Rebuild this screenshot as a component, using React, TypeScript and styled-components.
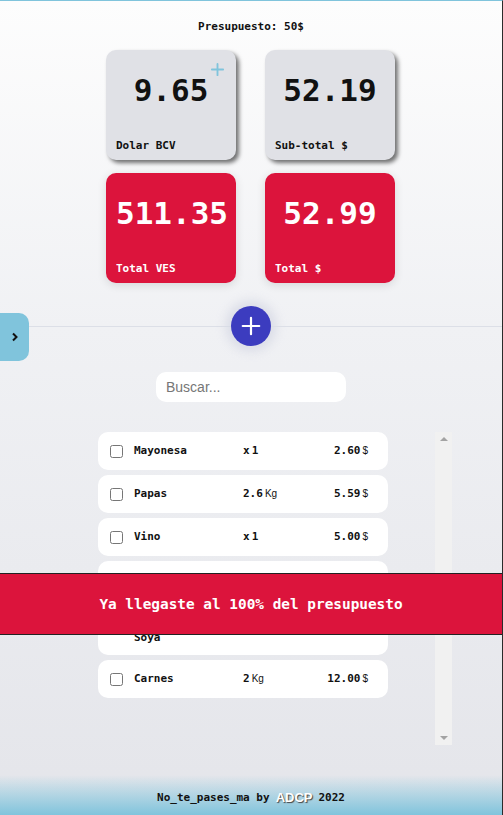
import { type FC } from 'react'
import styled, { createGlobalStyle, css } from 'styled-components'

const GlobalStyle = createGlobalStyle`
  html,
  body {
    margin: 0;
    padding: 0;
  }

  body {
    font-family: 'DejaVu Sans Mono', monospace;
    color: #111;
  }

  * {
    box-sizing: border-box;
  }
`

const Page = styled.main`
  background: linear-gradient(180deg, #fdfdfd 0%, #f0f1f4 40%, #e4e5ea 100%);
  border-right: 1px solid #2b2b2b;
  border-top: 1px solid #80c4dc;
  display: flex;
  flex-direction: column;
  min-height: 100vh;
  overflow: hidden;
  padding-top: 19px;
  position: relative;
`

const Title = styled.h1`
  font-size: 11px;
  font-weight: bold;
  line-height: 14px;
  margin: 0 0 16px;
  text-align: center;
`

const CardGrid = styled.section`
  column-gap: 29px;
  display: grid;
  grid-template-columns: 130px 130px;
  justify-content: center;
  margin-left: -1px;
  row-gap: 13px;
`

const Card = styled.div<{ $accent?: boolean }>`
  border-radius: 10px;
  display: flex;
  flex-direction: column;
  height: 110px;
  justify-content: space-between;
  padding: 22px 10px 7px;
  position: relative;

  ${({ $accent }) =>
    $accent
      ? css`
          background: #dc143c;
          box-shadow: 0 2px 10px rgba(0, 0, 0, 0.12);
          color: #fff;
        `
      : css`
          background: #e0e1e6;
          box-shadow: 3px 3px 4px rgba(0, 0, 0, 0.55);
          color: #111;
        `}
`

const CardValue = styled.span`
  font-size: 31px;
  font-weight: bold;
  line-height: 36px;
  text-align: center;
`

const CardLabel = styled.span`
  font-size: 11px;
  font-weight: bold;
  line-height: 14px;
`

const AddRateButton = styled.button`
  align-items: center;
  background: none;
  border: 0;
  cursor: pointer;
  display: flex;
  padding: 0;
  position: absolute;
  right: 11px;
  top: 12px;
`

const DividerRow = styled.div`
  align-items: center;
  display: flex;
  height: 40px;
  margin-top: 23px;
`

const Line = styled.span`
  background: #dcdfe7;
  flex: 1;
  height: 1px;
`

const AddButton = styled.button`
  align-items: center;
  background: #3c3cbf;
  border: 0;
  border-radius: 50%;
  box-shadow: 0 0 10px 6px rgba(214, 216, 228, 0.75);
  cursor: pointer;
  display: flex;
  height: 40px;
  justify-content: center;
  padding: 0;
  width: 40px;
`

const Search = styled.input`
  align-self: center;
  background: #fff;
  border: 0;
  border-radius: 10px;
  color: #333;
  font-family: 'Liberation Sans', Arial, sans-serif;
  font-size: 14px;
  height: 30px;
  margin-top: 26px;
  outline: none;
  padding: 0 10px;
  width: 190px;

  &::placeholder {
    color: #767676;
  }
`

const ListArea = styled.section`
  column-gap: 47px;
  display: flex;
  height: 313px;
  margin-top: 30px;
  padding-left: 98px;
`

const Items = styled.ul`
  display: flex;
  flex-direction: column;
  gap: 5px;
  list-style: none;
  margin: 0;
  overflow-y: auto;
  padding: 0;
  width: 290px;
`

const Row = styled.li<{ $tall?: boolean }>`
  align-items: center;
  background: #fff;
  border-radius: 10px;
  column-gap: 11px;
  display: grid;
  flex-shrink: 0;
  font-size: 11px;
  font-weight: bold;
  grid-template-columns: 13px 98px 1fr auto;
  height: ${({ $tall }) => ($tall ? '94px' : '38px')};
  line-height: 14px;
  padding: 0 20px 0 12px;

  ${({ $tall }) =>
    $tall &&
    css`
      & > input {
        align-self: end;
        margin-bottom: 21px;
      }

      & > span:nth-child(2) {
        align-self: end;
        padding-bottom: 10px;
      }
    `}
`

const Check = styled.input`
  height: 13px;
  margin: 0;
  width: 13px;
`

const Qty = styled.span`
  align-items: baseline;
  display: flex;
  gap: 2px;
`

const Price = styled.span`
  align-items: baseline;
  display: flex;
  gap: 2px;
  justify-content: flex-end;
`

const Unit = styled.small`
  font-family: 'Liberation Sans', Arial, sans-serif;
  font-size: 10px;
  font-weight: normal;
`

const Track = styled.div`
  align-items: center;
  background: #f1f1f1;
  display: flex;
  flex-direction: column;
  justify-content: space-between;
  padding: 5px 0;
  width: 17px;
`

const Arrow = styled.span<{ $down?: boolean }>`
  border-left: 4px solid transparent;
  border-right: 4px solid transparent;
  ${({ $down }) =>
    $down
      ? css`
          border-top: 4px solid #a3a3a3;
        `
      : css`
          border-bottom: 4px solid #a3a3a3;
        `}
  height: 0;
  width: 0;
`

const Footer = styled.footer`
  align-items: center;
  background: linear-gradient(180deg, rgba(128, 196, 220, 0) 0%, #80c4dc 100%);
  display: flex;
  font-size: 11px;
  font-weight: bold;
  gap: 6px;
  height: 40px;
  justify-content: center;
  margin-top: auto;
  padding-top: 4px;
`

const Brand = styled.span`
  color: #fff;
  font-family: 'Liberation Sans', Arial, sans-serif;
  font-size: 13px;
  font-weight: bold;
  text-shadow: 1px 1px 1px #444;
`

const SideTab = styled.button`
  align-items: center;
  background: #80c4dc;
  border: 0;
  border-radius: 0 10px 10px 0;
  cursor: pointer;
  display: flex;
  height: 48px;
  justify-content: center;
  left: 0;
  padding: 0;
  position: absolute;
  top: 312px;
  width: 29px;
`

const Toast = styled.div`
  align-items: center;
  background: #dc143c;
  border-bottom: 1px solid #222;
  border-top: 1px solid #222;
  color: #fff;
  display: flex;
  font-size: 14.4px;
  font-weight: bold;
  height: 62px;
  justify-content: center;
  left: 0;
  position: absolute;
  right: 0;
  top: 572px;
`

type Item = { name: string; qty?: string; unit?: 'x' | 'Kg'; price?: string; tall?: boolean }

const items: Item[] = [
  { name: 'Mayonesa', qty: '1', unit: 'x', price: '2.60' },
  { name: 'Papas', qty: '2.6', unit: 'Kg', price: '5.59' },
  { name: 'Vino', qty: '1', unit: 'x', price: '5.00' },
  // this row sits under the toast, only its last line shows
  { name: 'Soya', tall: true },
  { name: 'Carnes', qty: '2', unit: 'Kg', price: '12.00' },
]

const Plus: FC<{ size: number; color: string; stroke: number }> = ({ size, color, stroke }) => (
  <svg width={size} height={size} viewBox="0 0 24 24" fill="none" stroke={color} strokeWidth={stroke} strokeLinecap="round">
    <path d="M12 3v18M3 12h18" />
  </svg>
)

export default function App() {
  return (
    <>
      <GlobalStyle />
      <Page>
        <Title>Presupuesto: 50$</Title>

        <CardGrid>
          <Card>
            <AddRateButton aria-label="Actualizar dolar">
              <Plus size={15} color="#80c4dc" stroke={3} />
            </AddRateButton>
            <CardValue>9.65</CardValue>
            <CardLabel>Dolar BCV</CardLabel>
          </Card>
          <Card>
            <CardValue>52.19</CardValue>
            <CardLabel>Sub-total $</CardLabel>
          </Card>
          <Card $accent>
            <CardValue>511.35</CardValue>
            <CardLabel>Total VES</CardLabel>
          </Card>
          <Card $accent>
            <CardValue>52.99</CardValue>
            <CardLabel>Total $</CardLabel>
          </Card>
        </CardGrid>

        <DividerRow>
          <Line />
          <AddButton aria-label="Agregar producto">
            <Plus size={22} color="#fff" stroke={2.4} />
          </AddButton>
          <Line />
        </DividerRow>

        <Search placeholder="Buscar..." />

        <ListArea>
          <Items>
            {items.map((item) => (
              <Row key={item.name} $tall={item.tall}>
                <Check type="checkbox" />
                <span>{item.name}</span>
                <Qty>
                  {item.unit === 'x' && (
                    <>
                      x<span>{item.qty}</span>
                    </>
                  )}
                  {item.unit === 'Kg' && (
                    <>
                      {item.qty}
                      <Unit>Kg</Unit>
                    </>
                  )}
                </Qty>
                <Price>
                  {item.price && (
                    <>
                      {item.price}
                      <Unit>$</Unit>
                    </>
                  )}
                </Price>
              </Row>
            ))}
          </Items>
          <Track>
            <Arrow />
            <Arrow $down />
          </Track>
        </ListArea>

        <Footer>
          <span>No_te_pases_ma by</span>
          <Brand>ADCP</Brand>
          <span>2022</span>
        </Footer>

        <SideTab aria-label="Abrir menu">
          <svg width="10" height="10" viewBox="0 0 10 10" fill="none" stroke="#111" strokeWidth="2">
            <path d="M3 1.5 6.5 5 3 8.5" />
          </svg>
        </SideTab>

        <Toast>Ya llegaste al 100% del presupuesto</Toast>
      </Page>
    </>
  )
}
